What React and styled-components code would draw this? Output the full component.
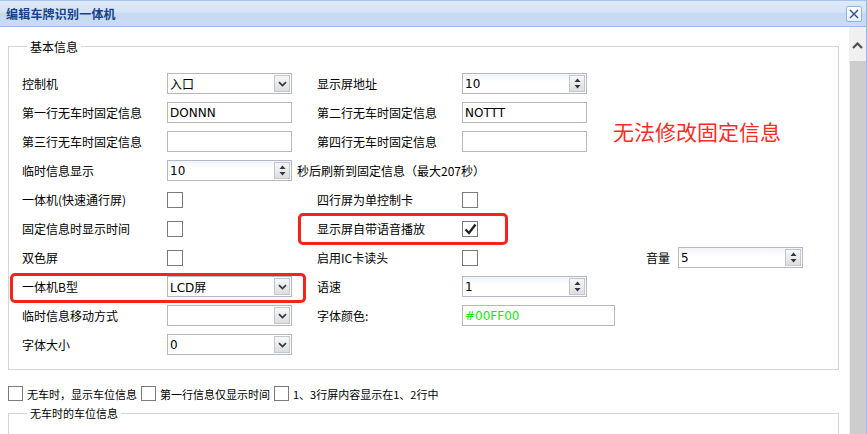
import React from 'react';
import styled, { createGlobalStyle } from 'styled-components';

const GlobalStyle = createGlobalStyle`
  html, body { margin: 0; padding: 0; background: #fff; overflow: hidden; }
  body {
    font-family: "Noto Sans CJK SC", "DejaVu Sans", sans-serif;
    font-size: 12px;
    color: #000;
  }
`;

const Window = styled.div`
  width: 867px;
  height: 434px;
  box-sizing: border-box;
  border-right: 1px solid #99bbe8;
  display: flex;
  flex-direction: column;
  overflow: hidden;
`;

const TitleBar = styled.div`
  height: 27px;
  flex: none;
  box-sizing: border-box;
  border-top: 1px solid #a9c4ea;
  border-bottom: 1px solid #99bbe8;
  background: linear-gradient(#e0e9f7 0%, #d6e3f5 45%, #c6d9f2 50%, #cadcf3 100%);
  display: flex;
  align-items: center;
  justify-content: space-between;
  padding: 0 4px 0 6px;
`;

const Title = styled.span`
  font-size: 12px;
  font-weight: bold;
  color: #15428b;
  letter-spacing: 0.2px;
`;

const CloseBtn = styled.div`
  width: 14px;
  height: 14px;
  border: 1px solid #8db2e3;
  border-radius: 2px;
  background: linear-gradient(#ffffff, #e6eef9);
  display: flex;
  align-items: center;
  justify-content: center;
`;

const Body = styled.div`
  flex: 1;
  display: flex;
  min-height: 0;
`;

const Content = styled.div`
  flex: 1;
  position: relative;
  padding: 0 10px 0 8px;
  overflow: hidden;
`;

const Scrollbar = styled.div`
  width: 17px;
  flex: none;
  background: #f0f0f0;
  display: flex;
  flex-direction: column;
`;

const ScrollArrow = styled.div`
  height: 34px;
  display: flex;
  align-items: center;
  justify-content: center;
  padding-top: 2px;
  box-sizing: border-box;
`;

const ScrollThumb = styled.div`
  flex: 1;
  margin-left: 1px;
  background: #cdcdcd;
`;

const Fieldset = styled.fieldset`
  margin: ${p => p.$top}px 0 0;
  border: 1px solid #d5d5d5;
  padding: 0 0 ${p => p.$bottom}px 13px;
  min-width: 0;
`;

const Legend = styled.legend`
  margin-left: 5px;
  padding: 0 3px;
  font-size: ${p => p.$size || 12}px;
  line-height: 17px;
`;

const Form = styled.div`
  display: grid;
  grid-template-columns: 145px 150px 145px 184px 32px 125px;
  grid-auto-rows: 29px;
  align-items: center;
  padding-top: 14px;
`;

const Label = styled.span`
  white-space: nowrap;
  line-height: 17px;
`;

const Cell = styled.div`
  display: flex;
  align-items: center;
  gap: 5px;
  grid-column: ${p => p.$span ? `span ${p.$span}` : 'auto'};
  white-space: nowrap;
`;

const Field = styled.div`
  width: ${p => p.$w || 125}px;
  height: 21px;
  box-sizing: border-box;
  border: 1px solid #b4b8c6;
  background: ${p => p.$soft ? 'linear-gradient(#f1f4f8, #ffffff 45%)' : '#fff'};
  display: flex;
  align-items: center;
  padding: 0 1px 0 2px;
  font-family: "DejaVu Sans", "Noto Sans CJK SC", sans-serif;
  font-size: 12px;
  color: ${p => p.$color || '#000'};
`;

const FieldText = styled.span`
  flex: 1;
  overflow: hidden;
`;

const SideBtn = styled.div`
  width: 16px;
  height: 17px;
  box-sizing: border-box;
  border: 1px solid #c3c6cc;
  background: linear-gradient(#f7f7f7, #dedede);
  display: flex;
  align-items: center;
  justify-content: center;
`;

const Check = styled.div`
  width: ${p => p.$size || 16}px;
  height: ${p => p.$size || 16}px;
  box-sizing: border-box;
  border: 1px solid #7a7a7a;
  background: #fff;
  display: flex;
  align-items: center;
  justify-content: center;
  flex: none;
`;

const Note = styled.div`
  position: absolute;
  left: 613px;
  top: 92px;
  font-size: 21px;
  line-height: 24px;
  color: #ff2a1f;
`;

const Mark = styled.div`
  position: absolute;
  left: ${p => p.$x}px;
  top: ${p => p.$y}px;
  width: ${p => p.$w}px;
  height: ${p => p.$h}px;
  box-sizing: border-box;
  border: 3px solid #f5241b;
  border-radius: 5px;
  pointer-events: none;
`;

const Options = styled.div`
  display: flex;
  align-items: center;
  gap: 4px;
  margin-top: 15px;
  height: 17px;
  font-size: 11px;
`;

const Option = styled.label`
  display: flex;
  align-items: center;
  gap: 4px;
  white-space: nowrap;
`;

const Chevron = () => (
  <svg width="9" height="6" viewBox="0 0 9 6">
    <path d="M1 1.2 L4.5 4.6 L8 1.2" fill="none" stroke="#2b3a4a" strokeWidth="1.7" />
  </svg>
);

const UpDown = () => (
  <svg width="7" height="11" viewBox="0 0 7 11">
    <path d="M3.5 0.5 L6.5 4 L0.5 4 Z" fill="#2d3846" />
    <path d="M3.5 10.5 L6.5 7 L0.5 7 Z" fill="#2d3846" />
  </svg>
);

const Tick = () => (
  <svg width="13" height="12" viewBox="0 0 13 12">
    <path d="M1.5 6.5 L5 10 L11.5 1.5" fill="none" stroke="#222" strokeWidth="2.4" />
  </svg>
);

const Select = ({ value, w }) => (
  <Field $w={w}>
    <FieldText>{value}</FieldText>
    <SideBtn><Chevron /></SideBtn>
  </Field>
);

const Spinner = ({ value, w }) => (
  <Field $w={w} $soft>
    <FieldText>{value}</FieldText>
    <SideBtn><UpDown /></SideBtn>
  </Field>
);

const Input = ({ value, w, color }) => (
  <Field $w={w} $color={color}>
    <FieldText>{value}</FieldText>
  </Field>
);

const Box = ({ checked, size }) => (
  <Check $size={size}>{checked && <Tick />}</Check>
);

export default function App() {
  return (
    <>
      <GlobalStyle />
      <Window>
        <TitleBar>
          <Title>编辑车牌识别一体机</Title>
          <CloseBtn>
            <svg width="10" height="10" viewBox="0 0 10 10">
              <path d="M1 1 L9 9 M9 1 L1 9" stroke="#2a4f8c" strokeWidth="1.4" />
            </svg>
          </CloseBtn>
        </TitleBar>
        <Body>
          <Content>
            <Fieldset $top={11} $bottom={10}>
              <Legend>基本信息</Legend>
              <Form>
                <Label>控制机</Label>
                <Cell><Select value="入口" /></Cell>
                <Label>显示屏地址</Label>
                <Cell $span={3}><Spinner value="10" /></Cell>

                <Label>第一行无车时固定信息</Label>
                <Cell><Input value="DONNN" /></Cell>
                <Label>第二行无车时固定信息</Label>
                <Cell $span={3}><Input value="NOTTT" /></Cell>

                <Label>第三行无车时固定信息</Label>
                <Cell><Input value="" /></Cell>
                <Label>第四行无车时固定信息</Label>
                <Cell $span={3}><Input value="" /></Cell>

                <Label>临时信息显示</Label>
                <Cell $span={5}>
                  <Spinner value="10" />
                  <span>秒后刷新到固定信息（最大207秒）</span>
                </Cell>

                <Label>一体机(快速通行屏)</Label>
                <Cell><Box /></Cell>
                <Label>四行屏为单控制卡</Label>
                <Cell $span={3}><Box /></Cell>

                <Label>固定信息时显示时间</Label>
                <Cell><Box /></Cell>
                <Label>显示屏自带语音播放</Label>
                <Cell $span={3}><Box checked /></Cell>

                <Label>双色屏</Label>
                <Cell><Box /></Cell>
                <Label>启用IC卡读头</Label>
                <Cell><Box /></Cell>
                <Label>音量</Label>
                <Cell><Spinner value="5" /></Cell>

                <Label>一体机B型</Label>
                <Cell><Select value="LCD屏" /></Cell>
                <Label>语速</Label>
                <Cell $span={3}><Spinner value="1" /></Cell>

                <Label>临时信息移动方式</Label>
                <Cell><Select value="" /></Cell>
                <Label>字体颜色:</Label>
                <Cell $span={3}><Input value="#00FF00" w={153} color="#10e810" /></Cell>

                <Label>字体大小</Label>
                <Cell><Select value="0" /></Cell>
              </Form>
            </Fieldset>

            <Options>
              <Option><Box size={15} />无车时，显示车位信息</Option>
              <Option><Box size={15} />第一行信息仅显示时间</Option>
              <Option><Box size={15} />1、3行屏内容显示在1、2行中</Option>
            </Options>

            <Fieldset $top={3} $bottom={40}>
              <Legend $size={11}>无车时的车位信息</Legend>
            </Fieldset>

            <Note>无法修改固定信息</Note>
            <Mark $x={10} $y={246} $w={296} $h={30} />
            <Mark $x={298} $y={186} $w={210} $h={32} />
          </Content>
          <Scrollbar>
            <ScrollArrow>
              <svg width="11" height="7" viewBox="0 0 11 7">
                <path d="M1 6 L5.5 1.5 L10 6" fill="none" stroke="#505050" strokeWidth="2.2" />
              </svg>
            </ScrollArrow>
            <ScrollThumb />
          </Scrollbar>
        </Body>
      </Window>
    </>
  );
}
